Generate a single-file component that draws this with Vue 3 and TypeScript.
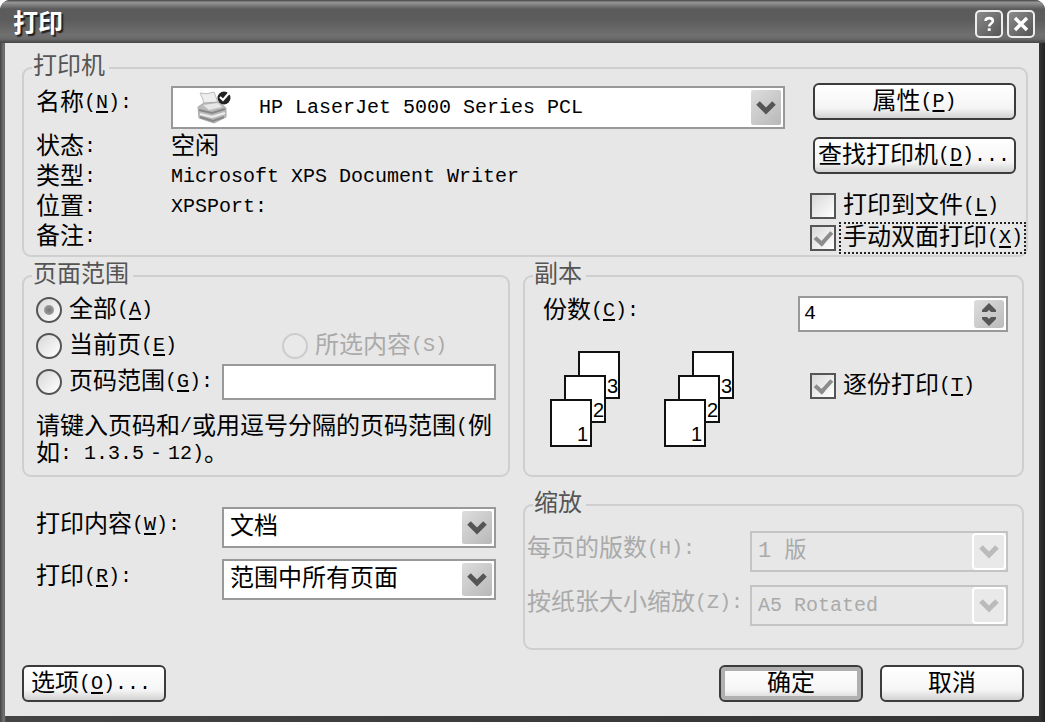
<script setup lang="ts">
import { h, ref } from 'vue'

// Sets Chinese and Latin runs at their own sizes; "&" marks the access key that follows it.
const Caption = (props: { text: string }) =>
  h(
    'span',
    { class: 'caption' },
    props.text
      .split(/([\u2e80-\uffef]+|&.)/)
      .filter(Boolean)
      .map((run) => {
        if (run.startsWith('&')) return h('u', run.slice(1))
        return h('span', { class: /[\u2e80-\uffef]/.test(run) ? 'han' : 'latin' }, run)
      }),
  )
Caption.props = ['text']

const details = [
  { term: '状态:', value: '空闲' },
  { term: '类型:', value: 'Microsoft XPS Document Writer' },
  { term: '位置:', value: 'XPSPort:' },
  { term: '备注:', value: '' },
]

const toFile = ref(false)
const duplex = ref(true)
const range = ref('all')
const pages = ref('')
const copies = ref(4)
const collate = ref(true)
</script>

<template>
  <main class="dialog">
    <header class="titlebar">
      <h1>打印</h1>
      <button type="button" class="sys" aria-label="帮助">
        <svg viewBox="0 0 28 28" fill="none" stroke="#fff" stroke-width="3">
          <path d="M10 10.5C10 6 18.5 6 18.5 10.5C18.5 13.5 14.2 13.5 14.2 17" />
          <path d="M12.5 20.5h3.5" />
        </svg>
      </button>
      <button type="button" class="sys" aria-label="关闭">
        <svg viewBox="0 0 28 28" fill="none" stroke="#fff" stroke-width="4">
          <path d="M7 7L21 21M21 7L7 21" />
        </svg>
      </button>
    </header>

    <form class="body" @submit.prevent>
      <fieldset class="printer">
        <legend>打印机</legend>
        <div class="printer-grid">
          <div class="printer-info">
            <label for="printer" class="name"><Caption text="名称(&N):" /></label>
            <div class="combo tall">
              <select id="printer" class="with-icon">
                <option>HP LaserJet 5000 Series PCL</option>
              </select>
              <svg class="printer-icon" viewBox="0 0 38 36">
                <path d="M5 3Q12 5 19 2L24 15L9 17Q9 9 5 3Z" fill="#eee" stroke="#bbb" />
                <path d="M3 17L9 13L24 12L31 18V27L19 33L4 28Z" fill="#bababa" stroke="#aaa" />
                <path d="M8 15L23 13L27 17L14 20Z" fill="#e7e7e7" />
                <path d="M4 20L17 23L30 19" fill="none" stroke="#888" stroke-width="2" />
                <path d="M5 24L17 27L30 23" fill="none" stroke="#eee" stroke-width="2" />
                <path d="M5 27L18 31L29 27" fill="none" stroke="#888" stroke-width="2" />
                <circle cx="29" cy="8" r="6.5" fill="#222" />
                <path d="M25 7L28 10L34 3" fill="none" stroke="#fff" stroke-width="2.2" />
              </svg>
              <span class="drop"><svg viewBox="0 0 30 20"><path d="M7 5L15 13L23 5" /></svg></span>
            </div>
            <dl>
              <template v-for="d in details" :key="d.term">
                <dt><Caption :text="d.term" /></dt>
                <dd><Caption :text="d.value" /></dd>
              </template>
            </dl>
          </div>
          <div class="printer-side">
            <button type="button" class="push"><Caption text="属性(&P)" /></button>
            <button type="button" class="push find"><Caption text="查找打印机(&D)..." /></button>
            <label class="check"><input v-model="toFile" type="checkbox" /><Caption text="打印到文件(&L)" /></label>
            <label class="check focused"><input v-model="duplex" type="checkbox" /><Caption text="手动双面打印(&X)" /></label>
          </div>
        </div>
      </fieldset>

      <div class="columns">
        <fieldset>
          <legend>页面范围</legend>
          <div class="range">
            <div class="row">
              <label class="radio"><input v-model="range" type="radio" name="range" value="all" /><Caption text="全部(&A)" /></label>
            </div>
            <div class="row">
              <label class="radio current"><input v-model="range" type="radio" name="range" value="current" /><Caption text="当前页(&E)" /></label>
              <label class="radio off"><input v-model="range" type="radio" name="range" value="selection" disabled /><Caption text="所选内容(S)" /></label>
            </div>
            <div class="row">
              <label class="radio pages"><input v-model="range" type="radio" name="range" value="pages" /><Caption text="页码范围(&G):" /></label>
              <input v-model="pages" class="field" type="text" aria-label="页码范围" />
            </div>
            <p><Caption text="请键入页码和/或用逗号分隔的页码范围(例如: 1.3.5" /><span class="dash">-</span><Caption text="12)。" /></p>
          </div>
        </fieldset>

        <fieldset>
          <legend>副本</legend>
          <div class="copies">
            <div class="copies-row">
              <label for="copies"><Caption text="份数(&C):" /></label>
              <div class="spin">
                <input id="copies" v-model="copies" type="number" min="1" />
                <div class="steps">
                  <button type="button" aria-label="增加" @click="copies++">
                    <svg viewBox="0 0 30 14"><path d="M15 3L22 10V12H17L15 10L13 12H8V10Z" /></svg>
                  </button>
                  <button type="button" aria-label="减少" @click="copies = Math.max(1, copies - 1)">
                    <svg viewBox="0 0 30 14"><path d="M15 12L22 5V3H17L15 5L13 3H8V5Z" /></svg>
                  </button>
                </div>
              </div>
            </div>
            <div class="collate">
              <svg v-for="n in 2" :key="n" class="stack" viewBox="0 0 70 97" aria-hidden="true">
                <g fill="#fff" stroke="#111" stroke-width="2">
                  <rect x="29" y="1" width="40" height="46" />
                  <rect x="15" y="25" width="40" height="46" />
                  <rect x="1" y="49" width="40" height="46" />
                </g>
                <text x="57" y="42">3</text>
                <text x="43" y="66">2</text>
                <text x="27" y="90">1</text>
              </svg>
              <label class="check"><input v-model="collate" type="checkbox" /><Caption text="逐份打印(&T)" /></label>
            </div>
          </div>
        </fieldset>
      </div>

      <div class="columns lower">
        <div class="what">
          <label for="what"><Caption text="打印内容(&W):" /></label>
          <div class="combo">
            <select id="what" class="cjk"><option>文档</option></select>
            <span class="drop"><svg viewBox="0 0 30 20"><path d="M7 5L15 13L23 5" /></svg></span>
          </div>
          <label for="which"><Caption text="打印(&R):" /></label>
          <div class="combo">
            <select id="which" class="cjk"><option>范围中所有页面</option></select>
            <span class="drop"><svg viewBox="0 0 30 20"><path d="M7 5L15 13L23 5" /></svg></span>
          </div>
        </div>

        <fieldset>
          <legend>缩放</legend>
          <div class="zoom">
            <label for="per-sheet"><Caption text="每页的版数(H):" /></label>
            <div class="combo off">
              <select id="per-sheet" class="mixed" disabled><option>1 版</option></select>
              <span class="drop"><svg viewBox="0 0 30 20"><path d="M7 5L15 13L23 5" /></svg></span>
            </div>
            <label for="paper"><Caption text="按纸张大小缩放(Z):" /></label>
            <div class="combo off">
              <select id="paper" disabled><option>A5 Rotated</option></select>
              <span class="drop"><svg viewBox="0 0 30 20"><path d="M7 5L15 13L23 5" /></svg></span>
            </div>
          </div>
        </fieldset>
      </div>

      <footer>
        <button type="button" class="push options"><Caption text="选项(&O)..." /></button>
        <button type="submit" class="push default"><Caption text="确定" /></button>
        <button type="button" class="push"><Caption text="取消" /></button>
      </footer>
    </form>
  </main>
</template>

<style>
body {
  margin: 0;
  background: #fff;
}
.caption .han {
  font-size: 24px;
  line-height: 24px;
  vertical-align: -2px;
}
.caption u {
  text-decoration-thickness: 2px;
  text-underline-offset: 3px;
}
</style>

<style scoped>
.dialog,
.dialog * {
  box-sizing: border-box;
}
.dialog {
  display: flex;
  flex-direction: column;
  min-height: 100vh;
  padding: 0 6px 6px 5px;
  border-radius: 10px 10px 0 0;
  background: linear-gradient(90deg, #444 0, #777 4px, #444 6px, #333 calc(100% - 5px), #222 100%);
  font: 20px/30px "Liberation Mono", "Noto Sans CJK SC", monospace;
  color: #000;
}
.titlebar {
  display: flex;
  align-items: center;
  gap: 4px;
  height: 43px;
  margin: 0 -6px 0 -5px;
  padding: 4px 10px 0 13px;
  border-radius: 10px 10px 0 0;
  background: linear-gradient(#555 0, #555 1px, #999 2px, #888 4px, #5b5b5b 9px, #5c5c5c 20px, #707070 35px, #696969 39px, #444 43px);
}
h1 {
  flex: 1;
  margin: 0;
  padding-bottom: 6px;
  font: bold 25px/30px "Noto Sans CJK SC", sans-serif;
  color: #fff;
  text-shadow: 2px 2px 1px #222;
}
.sys {
  width: 28px;
  height: 28px;
  padding: 0;
  border: 2px solid #eee;
  border-radius: 5px;
  background: linear-gradient(135deg, #8a8a8a, #555);
}
.sys svg {
  display: block;
  width: 24px;
  height: 24px;
}
.body {
  flex: 1;
  padding: 13px 11px 14px 17px;
  background: #e7e7e7;
}
fieldset {
  min-width: 0;
  margin: 0;
  padding: 0;
  border: 2px solid #cfcfcf;
  border-radius: 9px;
}
legend {
  margin-left: 8px;
  padding: 0 4px 0 1px;
  font-size: 24px;
  line-height: 24px;
  color: #555;
}
.printer-grid {
  display: grid;
  grid-template-columns: 1fr 216px;
  column-gap: 25px;
  padding: 0 0 1px 12px;
}
.printer-info {
  display: grid;
  grid-template-columns: 135px 1fr;
  align-content: start;
}
.name {
  padding-top: 8px;
}
.printer-info .combo {
  margin: 6px 0 3px;
}
dl {
  grid-column: 1 / -1;
  display: grid;
  grid-template-columns: 135px 1fr;
  grid-auto-rows: 30px;
  margin: 0;
}
dd {
  margin: 0;
}
.printer-side {
  padding-top: 3px;
}
.printer-side .push {
  display: block;
  width: 203px;
  margin: 0 0 17px 3px;
}
.push {
  width: 144px;
  height: 37px;
  padding: 0;
  border: 2px solid #3c3c3c;
  border-radius: 6px;
  background: linear-gradient(#fff, #f5f5f5 70%, #d2d2d2);
  font: inherit;
  line-height: 30px;
  color: #000;
  white-space: nowrap;
}
.printer-side .find,
.options {
  padding-left: 3px;
  text-align: left;
}
.printer-side .find {
  margin-bottom: 16px;
}
.options {
  padding-left: 7px;
}
.default {
  box-shadow: inset 0 0 0 4px #b0b0b0;
}
.check,
.radio {
  display: flex;
  align-items: center;
  white-space: nowrap;
}
.check {
  height: 32px;
}
.check .caption {
  margin-left: 4px;
  padding: 0 2px 0 3px;
}
.focused .caption {
  outline: 2px dotted #222;
  outline-offset: -1px;
}
input[type="checkbox"],
input[type="radio"] {
  appearance: none;
  display: grid;
  place-items: center;
  flex: none;
  width: 26px;
  height: 26px;
  margin: 0;
  border: 2px solid #555;
  background: linear-gradient(135deg, #d8d8d8, #fff);
}
input[type="checkbox"]:checked::before {
  content: "";
  width: 7px;
  height: 13px;
  margin-bottom: 4px;
  border: solid #8c8c8c;
  border-width: 0 4px 4px 0;
  transform: rotate(42deg);
}
input[type="radio"] {
  border-radius: 50%;
}
input[type="radio"]:checked::before {
  content: "";
  width: 10px;
  height: 10px;
  border-radius: 50%;
  background: radial-gradient(#777, #aaa);
}
input[type="radio"]:disabled {
  border-color: #ccc;
  background: #e9e9e9;
}
.radio {
  gap: 7px;
}
.off {
  color: #aaa;
}
.columns {
  display: grid;
  grid-template-columns: 488fr 501fr;
  column-gap: 13px;
  margin: 7px 4px 0 0;
}
.range {
  padding: 4px 0 8px 12px;
}
.row {
  display: flex;
  align-items: center;
  height: 36px;
}
.current {
  width: 246px;
}
.pages {
  width: 186px;
}
.field {
  flex: 1;
  min-width: 0;
  height: 36px;
  margin-right: 12px;
  padding: 0 6px;
  border: 2px solid #999;
  background: #fff;
  font: inherit;
}
.range p {
  margin: 13px 0 0;
  line-height: 27px;
}
.dash {
  display: inline-block;
  width: 24px;
  text-align: center;
}
.copies {
  padding: 8px 14px 0 18px;
}
.copies-row {
  display: flex;
  justify-content: space-between;
}
.spin {
  display: flex;
  width: 210px;
  height: 36px;
  padding: 2px;
  border: 2px solid #999;
  background: #fff;
}
.spin input {
  flex: 1;
  min-width: 0;
  padding: 0 2px;
  border: 0;
  background: none;
  font: inherit;
  appearance: textfield;
}
.spin input::-webkit-inner-spin-button {
  display: none;
}
.steps {
  display: grid;
  width: 30px;
  border-radius: 3px;
  background: linear-gradient(135deg, #ddd, #bbb);
}
.steps button {
  padding: 0;
  border: 0;
  background: none;
}
.steps svg {
  display: block;
  width: 30px;
  height: 14px;
  fill: #555;
}
.collate {
  display: flex;
  align-items: flex-start;
  gap: 44px;
  margin-top: 19px;
  padding-left: 7px;
}
.stack {
  flex: none;
  width: 70px;
  height: 97px;
  font: 20px "Liberation Sans", sans-serif;
}
.collate .check {
  width: 198px;
  margin: 19px 0 0 auto;
}
.lower {
  margin-top: 16px;
}
.what {
  display: grid;
  grid-template-columns: 186px 1fr;
  grid-auto-rows: 41px;
  row-gap: 11px;
  padding: 14px 14px 0;
}
.what label,
.zoom label {
  padding-top: 3px;
}
.combo {
  display: grid;
  height: 41px;
  border: 2px solid #999;
  background: #fff;
}
.tall {
  height: 43px;
}
.combo > * {
  grid-area: 1 / 1;
}
.combo select {
  appearance: none;
  min-width: 0;
  width: 100%;
  height: 100%;
  padding: 0 36px 0 6px;
  border: 0;
  background: none;
  font: inherit;
  color: inherit;
  opacity: 1;
}
.combo .with-icon {
  padding-left: 86px;
}
.combo .cjk {
  font-size: 24px;
}
.combo .mixed {
  font-size: 22px;
}
.printer-icon {
  align-self: center;
  width: 38px;
  height: 36px;
  margin-left: 22px;
  pointer-events: none;
}
.drop {
  display: grid;
  place-items: center;
  justify-self: end;
  width: 30px;
  margin: 2px;
  border-radius: 2px;
  background: linear-gradient(135deg, #ddd, #b8b8b8);
  pointer-events: none;
}
.drop svg {
  width: 30px;
  height: 20px;
  fill: none;
  stroke: #555;
  stroke-width: 5;
}
.combo.off {
  border-color: #c4c4c4;
  background: #e7e7e7;
}
.off .drop {
  background: #e9e9e9;
  box-shadow: 0 0 0 2px #fff;
}
.off .drop svg {
  stroke: #bbb;
}
.zoom {
  display: grid;
  grid-template-columns: 223px 1fr;
  grid-auto-rows: 41px;
  row-gap: 13px;
  padding: 14px 14px 22px 2px;
  color: #aaa;
}
.zoom label {
  white-space: nowrap;
}
footer {
  display: flex;
  gap: 17px;
  margin: 15px 4px 0 0;
}
.options {
  margin-right: auto;
}
</style>
